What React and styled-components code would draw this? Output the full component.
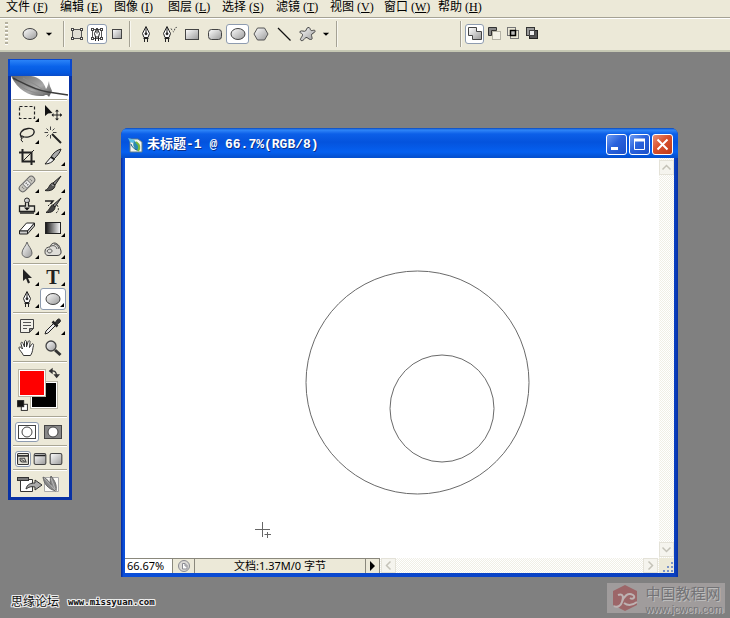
import React from 'react'
import styled, { createGlobalStyle, css } from 'styled-components'

const sans = '"Liberation Sans", "Noto Sans CJK SC", sans-serif'
const face = '#ece9d8'
const navy = '#0831a5'

const GlobalStyle = createGlobalStyle`
  * {
    box-sizing: border-box;
  }
  body {
    margin: 0;
    background: #808080;
    font-family: ${sans};
    font-size: 12px;
    color: #000;
  }
  button, input {
    font: inherit;
    color: inherit;
    padding: 0;
    margin: 0;
    border: 0;
    background: none;
    border-radius: 0;
  }
  svg {
    display: block;
    flex: none;
  }
`

const Page = styled.div`
  display: flex;
  flex-direction: column;
  min-height: 100vh;
`

/* menu bar */

const MenuBar = styled.nav`
  display: flex;
  height: 17px;
  padding-left: 6px;
  background: ${face};
`
const MenuButton = styled.button`
  flex: 0 0 54px;
  display: flex;
  gap: 3px;
  align-items: center;
  height: 15px;
  font-family: "Liberation Serif", "Noto Sans CJK SC", serif;
  line-height: 15px;
  white-space: nowrap;
`

/* options bar */

const OptionsBar = styled.div`
  display: flex;
  align-items: center;
  height: 35px;
  padding-left: 5px;
  background: ${face};
  border-top: 1px solid #a5a294;
  border-bottom: 2px solid #c6c8b4;
  box-shadow: inset 0 1px #fff;
`
const Grip = styled.div`
  width: 3px;
  height: 24px;
  margin-right: 11px;
  background: repeating-linear-gradient(#b5b19f 0 2px, #fff 2px 3px, ${face} 3px 4px);
`
const OptionGroup = styled.div`
  display: flex;
  align-items: center;
  height: 26px;
  min-width: ${(p) => p.$min || 0}px;
  padding: 0 2px 0 ${(p) => p.$left || 0}px;
  ${(p) =>
    p.$divided &&
    css`
      border-left: 1px solid #a5a294;
      box-shadow: inset 1px 0 #f8f7f0;
    `}
`
const selected = css`
  background: #fff;
  border: 1px solid #8e9cb0;
  border-radius: 3px;
`
const OptionButton = styled.button`
  display: flex;
  align-items: center;
  justify-content: center;
  width: ${(p) => p.$w || 23}px;
  height: 20px;
  ${(p) => p.$on && selected}
`

/* desktop area */

const Desk = styled.main`
  flex: 1;
  display: flex;
  align-items: flex-start;
  gap: 49px;
  padding: 7px 52px 0 8px;
`

/* tool palette */

const Palette = styled.aside`
  flex: none;
  width: 64px;
  border: solid ${navy};
  border-width: 0 3px 3px;
  background: ${face};
`
const PaletteTitle = styled.div`
  height: 17px;
  margin: 0 -3px;
  border: solid #0a48cc;
  border-width: 1px 2px 0;
  background: linear-gradient(#2a83f8, #0a63ea 40%, #0458de 80%, #0a4cc8);
`
const Feather = styled.div`
  height: 23px;
  background: #fff;
`
const ToolGroup = styled.div`
  display: grid;
  grid-template-columns: 26px 26px;
  justify-content: center;
  padding: 2px 0;
  margin: 0 2px;
  border-top: 1px solid #a9a695;
  box-shadow: inset 0 1px #fff;
`
const ToolButton = styled.button`
  position: relative;
  display: flex;
  align-items: center;
  justify-content: center;
  height: 22px;
  ${(p) => p.$on && selected}
  ${(p) =>
    p.$more &&
    css`
      &::after {
        content: '';
        position: absolute;
        right: 1px;
        bottom: 2px;
        border: 2px solid #000;
        border-top-color: transparent;
        border-left-color: transparent;
      }
    `}
`
const PaletteRow = styled.div`
  display: flex;
  align-items: center;
  justify-content: space-between;
  height: ${(p) => p.$h}px;
  margin: 0 2px;
  padding: 2px 3px 0 2px;
  border-top: 1px solid #a9a695;
  box-shadow: inset 0 1px #fff;
`
const ModeButton = styled.button`
  display: flex;
  align-items: center;
  justify-content: center;
  width: ${(p) => p.$w}px;
  height: ${(p) => p.$h}px;
  ${(p) => p.$on && selected}
`
const Swatches = styled.div`
  position: relative;
  width: 48px;
  height: 44px;
`
const Swatch = styled.button`
  position: absolute;
  left: ${(p) => p.$x}px;
  top: ${(p) => p.$y}px;
  width: 28px;
  height: 28px;
  background: ${(p) => p.$color};
  border: 1px solid #fff;
  outline: 1px solid #b9b6a6;
  outline-offset: -1px;
  box-shadow: inset 0 0 0 1px #fff;
`
const SwatchTool = styled.button`
  position: absolute;
  left: ${(p) => p.$x}px;
  top: ${(p) => p.$y}px;
`

/* document window */

const DocWindow = styled.section`
  flex: 1;
  align-self: stretch;
  display: flex;
  flex-direction: column;
  min-width: 300px;
  margin-top: 69px;
  padding: 0 4px 4px;
  border-radius: 7px 7px 0 0;
  background: linear-gradient(90deg, ${navy} 1px, #0a4ed8 2px, #0a3fc0 calc(100% - 3px), ${navy});
`
const TitleBar = styled.header`
  display: flex;
  align-items: center;
  gap: 4px;
  height: 30px;
  margin: 0 -4px;
  padding: 3px 5px 0 6px;
  border-radius: 7px 7px 0 0;
  background: linear-gradient(#0a47b8, #2f86f8 2px, #0c5fe8 6px, #0453dd 14px, #0560f0 24px, #0450d0 29px);
`
const DocTitle = styled.h1`
  flex: 1;
  margin: 0;
  font: bold 13px/18px "Liberation Mono", "Noto Sans CJK SC", monospace;
  color: #fff;
  text-shadow: 1px 1px #0a2f88;
  white-space: nowrap;
  overflow: hidden;
`
const WindowButtons = styled.div`
  display: flex;
  gap: 2px;
`
const WindowButton = styled.button`
  width: 21px;
  height: 21px;
  border: 1px solid #fff;
  border-radius: 3px;
  background: ${(p) =>
    p.$close
      ? 'linear-gradient(135deg, #e89078, #d8502c 45%, #c03a18)'
      : 'linear-gradient(135deg, #6c9cf4, #2a62dc 45%, #1c50c8)'};
`
const DocBody = styled.div`
  flex: 1;
  display: flex;
  background: #fff;
`
const Canvas = styled.div`
  flex: 1;
  display: flex;
`
const Drawing = styled.svg`
  flex: 1;
  width: 100%;
  height: 400px;
  min-width: 0;
`
const track = css`
  background: repeating-conic-gradient(#f0efe6 0 25%, #fff 0 50%) 0 0 / 2px 2px;
`
const VScroll = styled.div`
  display: flex;
  flex-direction: column;
  justify-content: space-between;
  width: 15px;
  padding: 2px 0 1px;
  ${track}
`
const HScroll = styled.div`
  flex: 1;
  display: flex;
  justify-content: space-between;
  padding: 0 1px 0 1px;
  ${track}
`
const ScrollButton = styled.button`
  display: flex;
  align-items: center;
  justify-content: center;
  width: 15px;
  height: 15px;
  background: #f5f4ee;
  border: 1px solid #e4e2d8;
`
const StatusBar = styled.footer`
  display: flex;
  height: 15px;
  background: ${face};
  font: 11px/14px "Noto Sans", "Noto Sans CJK SC", sans-serif;
`
const ZoomInput = styled.input`
  width: 48px;
  padding-left: 2px;
  background: #fff;
  border-top: 1px solid #8a887c;
  border-right: 1px solid #8a887c;
`
const StatusCell = styled.div`
  display: flex;
  align-items: center;
  justify-content: center;
  width: ${(p) => p.$w}px;
  height: 15px;
  border-top: 1px solid #8a887c;
  border-right: 1px solid #8a887c;
  white-space: nowrap;
`
const StatusArrow = styled(StatusCell).attrs({ as: 'button' })``
const ResizeGrip = styled.div`
  width: 15px;
  height: 15px;
`

/* site marks under the window */

const Marks = styled.footer`
  display: flex;
  justify-content: space-between;
  align-items: flex-start;
  height: 41px;
  padding: 6px 5px 0 11px;
`
const ForumMark = styled.div`
  display: flex;
  align-items: center;
  gap: 9px;
  padding-top: 11px;
  line-height: 16px;
  color: #111;
  text-shadow: 1px 0 #eee, -1px 0 #eee, 0 1px #eee, 0 -1px #eee, 1px 1px #eee, -1px -1px #eee, 1px -1px #eee, -1px 1px #eee;
`
const ForumLink = styled.a`
  font: bold 9px/12px "DejaVu Sans Mono", monospace;
  color: inherit;
  text-decoration: none;
`
const SiteMark = styled.a`
  display: flex;
  align-items: center;
  gap: 6px;
  height: 30px;
  padding: 0 2px 0 4px;
  background: #a09c9c;
  color: #737376;
  text-decoration: none;
  text-shadow: 1px 1px #bdbdbd;
`
const SiteName = styled.div`
  font: 15px/22px "Noto Sans CJK SC", sans-serif;
  white-space: nowrap;
`
const SiteUrl = styled.div`
  font: 11px/10px "Liberation Sans", sans-serif;
`

/* gradients shared by all icons */
const HiddenSvg = styled.svg`
  position: absolute;
`
const Paints = () => (
  <HiddenSvg width="0" height="0" aria-hidden="true">
    <defs>
      <linearGradient id="metal" x1="0" y1="0" x2="1" y2="1">
        <stop offset="0" stopColor="#fff" />
        <stop offset="1" stopColor="#999" />
      </linearGradient>
      <linearGradient id="ramp">
        <stop offset="0" stopColor="#111" />
        <stop offset="1" stopColor="#fff" />
      </linearGradient>
      <linearGradient id="plume" x1="0" y1="0" x2="1" y2="1">
        <stop offset="0" stopColor="#666" />
        <stop offset=".6" stopColor="#a8a8a8" />
        <stop offset="1" stopColor="#555" />
      </linearGradient>
    </defs>
  </HiddenSvg>
)

const Icon = ({ size = 18, children }) => (
  <svg width={size} height={size} viewBox="0 0 18 18" fill="none" stroke="#222" aria-hidden="true">
    {children}
  </svg>
)

const nib = (
  <>
    <path d="M9 1.5L5.5 8.5L7 12.5H11L12.5 8.5Z" fill="#fff" />
    <path d="M9 2V8" />
    <circle cx="9" cy="8.8" r="1" fill="#222" />
    <path d="M6.5 13.5H11.5M7.5 14V17M10.5 14V17" />
  </>
)
const handles = (
  <g fill="#fff" stroke="#444" shapeRendering="crispEdges">
    <rect x="3.5" y="3.5" width="2" height="2" />
    <rect x="12.5" y="3.5" width="2" height="2" />
    <rect x="3.5" y="12.5" width="2" height="2" />
    <rect x="12.5" y="12.5" width="2" height="2" />
  </g>
)

const icons = {
  ellipse: <ellipse cx="9" cy="9" rx="7" ry="5.5" fill="url(#metal)" stroke="#444" />,
  down: <path d="M5.5 7.5H12.5L9 11Z" fill="#000" stroke="none" />,
  shapeLayer: (
    <>
      <rect x="4.5" y="4.5" width="9" height="9" fill="#e0ded4" stroke="#555" />
      {handles}
    </>
  ),
  paths: (
    <>
      <rect x="4.5" y="4.5" width="9" height="9" stroke="#555" />
      {handles}
      <path d="M9 3L6.5 8.5L7.5 12H10.5L11.5 8.5Z" fill="#fff" />
      <path d="M9 4V8.5M7.5 12V16M10.5 12V16" />
    </>
  ),
  fillPixels: <rect x="4.5" y="4.5" width="9" height="9" fill="url(#metal)" stroke="#444" />,
  pen: nib,
  freePen: (
    <>
      <g transform="translate(-2 0)">{nib}</g>
      <path d="M11 3.5C13 7 14 8 14.5 5S16 2 18 3" stroke="#444" strokeDasharray="1.5 1.5" />
    </>
  ),
  rect: <rect x="2.5" y="4.5" width="13" height="10" fill="url(#metal)" stroke="#444" />,
  rounded: <rect x="2.5" y="4.5" width="13" height="10" rx="3" fill="url(#metal)" stroke="#444" />,
  polygon: <path d="M5.5 3H12.5L16 9L12.5 15H5.5L2 9Z" fill="url(#metal)" stroke="#555" />,
  line: <path d="M3 3L15.5 15.5" stroke="#111" strokeWidth="1.3" />,
  custom: (
    <path
      d="M10 2.5C12.5 2 12 5 13 5.5S17.500 4 17 6.500C16.500 8.500 13 8 13.500 10.500S15 14.500 12.500 14.500C10.500 14.500 9.500 12 8 12.500S5.500 16.500 3 15.500C1 14 5 11.500 4.500 9.500S.500 8 2 6.500S6.500 7 7.500 6S8.500 3 10 2.500Z"
      fill="url(#metal)"
      stroke="#444"
    />
  ),
  add: <path d="M2.5 2.5H10.5V6.5H15.5V14.5H6.5V10.5H2.5Z" fill="url(#metal)" stroke="#444" />,
  subtract: (
    <>
      <path d="M3.5 2.5H11.5V5.5H6.5V10.5H3.5Z" fill="#888" stroke="#333" />
      <rect x="7.5" y="6.5" width="8" height="8" fill="#f4f2e8" stroke="#b5b3a6" />
    </>
  ),
  intersect: (
    <>
      <rect x="3.5" y="2.5" width="8" height="8" stroke="#777" />
      <rect x="6.5" y="5.5" width="8" height="8" stroke="#777" />
      <rect x="6.5" y="5.5" width="5" height="5" fill="#bbb" stroke="#000" strokeWidth="1.5" />
    </>
  ),
  exclude: (
    <>
      <rect x="3.5" y="2.5" width="8" height="8" fill="#999" stroke="#333" />
      <rect x="6.5" y="5.5" width="8" height="8" fill="#555" stroke="#222" />
      <rect x="6.5" y="5.5" width="5" height="5" fill="#eee" stroke="#444" />
    </>
  ),
  marquee: <rect x="1.5" y="2.5" width="15" height="12" strokeDasharray="3 2" strokeWidth="1.2" />,
  move: (
    <>
      <path d="M1 1V12L4 9.5L8.5 9Z" fill="#111" stroke="none" />
      <path d="M13 6V16M8 11H18" />
      <path d="M11 7.5L13 5.5L15 7.5ZM11 14.5L13 16.5L15 14.5ZM9.5 9L7.5 11L9.5 13ZM16 9L18 11L16 13Z" fill="#222" stroke="none" />
    </>
  ),
  lasso: (
    <>
      <path d="M4 11C0 8 4 3 10 2.5S17 5 15.5 8S8 12 4.5 10.5" strokeWidth="1.3" />
      <path d="M4.5 10C2.5 9.5 2 12 4 12S6 10 4.5 10M4 12C2.5 13 3 15 5 16" />
    </>
  ),
  wand: (
    <>
      <path d="M8 8L17 17" strokeWidth="2" />
      <path d="M6.5 .5V4M6.5 9V12.5M.5 6.5H4M9 6.5H12.5M2.5 2.5L4.5 4.5M10.5 2.5L8.5 4.5M2.5 10.5L4.5 8.5" stroke="#444" />
    </>
  ),
  crop: (
    <>
      <path d="M4.5 1V13.5H17M1 4.5H13.5V17" strokeWidth="2" />
      <path d="M5 13L16 2" />
    </>
  ),
  slice: (
    <>
      <path d="M17 1C13 2 9 5 7 9L10 11C13 8 16 5 17 1Z" fill="#aaa" />
      <path d="M7 9L1 16C5 16 9 14 10.5 11Z" fill="#eee" />
      <path d="M7 9L10.5 11.5" strokeWidth="2" />
    </>
  ),
  heal: (
    <g transform="rotate(-45 9 9)">
      <rect x="-.5" y="5.5" width="19" height="7" rx="3.5" fill="#c9c7bf" stroke="#666" />
      <rect x="6" y="6" width="6" height="6" fill="#eee" stroke="#888" />
      <path d="M3 8H4M3 10H4M14 8H15M14 10H15M8 8H10M8 10H10" stroke="#666" />
    </g>
  ),
  brush: (
    <>
      <path d="M17 1L9 8L11 10Z" fill="#888" />
      <path d="M8.5 8C5 9 6 13 1 15.5C6 16.5 11 14.5 11 10Z" fill="#555" />
      <path d="M8 9.5L9.5 11" stroke="#ddd" />
    </>
  ),
  stamp: (
    <>
      <circle cx="9" cy="3.500" r="2.500" fill="url(#metal)" />
      <path d="M7.500 6V9H1.500V14.500H16.500V9H10.500V6" fill="#e6e4da" strokeWidth="1.300" />
      <path d="M6 10.500H12L9 13.500Z" fill="#111" stroke="none" />
      <path d="M2 16H16" strokeWidth="1.500" />
    </>
  ),
  history: (
    <>
      <path d="M17 1L9 8L11 10Z" fill="#888" />
      <path d="M8.5 8C6 9 6 13 2 15.5C7 16 11 14 11 10Z" fill="#444" />
      <path d="M1 4H9L6.5 7" strokeWidth="1.5" />
      <path d="M4 9L8 5M13 8C15 11 15 14 12 16" strokeDasharray="2 1.5" />
    </>
  ),
  eraser: (
    <>
      <path d="M1.5 12L8.5 4H16.5L9.5 12Z" fill="#fff" />
      <path d="M1.5 12V15H9.5L16.5 7V4L9.5 12Z" fill="#ccc" />
      <path d="M9.5 12V15" />
    </>
  ),
  gradient: <rect x="1.5" y="3.5" width="15" height="11" fill="url(#ramp)" />,
  blur: <path d="M9 1C8 5 4 8 4 12A5 4.5 0 0 0 14 12C14 8 10 5 9 1Z" fill="url(#metal)" stroke="#666" />,
  sponge: (
    <>
      <path d="M1 10C1 7 4 6 6 6C7 2 11 1 13 3C15 4 16 6 17 10C17.5 13 16 14.5 13 14.5H4C1 14 1 12 1 10Z" fill="#deddd8" stroke="#444" />
      <path d="M3 10C5 7 8 8 8 10S4 13 3 10M7 5C10 4 12 5 13 8M10 3C13 3 14 5 15 8" stroke="#555" />
    </>
  ),
  select: <path d="M5 1V13L8 10.5L10 15.5L12 14.5L10 10H14Z" fill="#222" stroke="none" />,
  note: (
    <>
      <path d="M2.5 2.5H15.5V11.5L11.5 15.5H2.5Z" fill="#f2f1ea" stroke="#444" />
      <path d="M5 5.5H13M5 8.5H13M5 11.5H9" stroke="#555" />
      <path d="M11.5 15.5V11.5H15.5Z" fill="#888" stroke="#444" />
    </>
  ),
  dropper: (
    <>
      <path d="M10 6L2 14L1 17L4 16L12 8" fill="#eee" />
      <path d="M8.5 4.5L13.5 9.5" strokeWidth="2.5" />
      <path d="M11 6L13.5 2.5C15 1 17.5 3 16 5L12.5 8Z" fill="#333" />
    </>
  ),
  hand: (
    <path
      d="M5.5 16.5C4 13 1 11 1 9S3 8 4.5 10L3 5C2.5 3 4.5 2.5 5 4.5L6.5 8L6.5 3C6.5 1 8.5 1 8.5 3V8L10 3C10.5 1 12.5 1.5 12 3.5L11.5 8.5L13.5 5.5C14.5 4 16 5 15.5 6.5C14.5 9.5 15 13 12.5 16.5Z"
      fill="#fff"
      stroke="#333"
    />
  ),
  zoom: (
    <>
      <path d="M11 11L16.5 16" stroke="#333" strokeWidth="3" />
      <circle cx="7" cy="7" r="5" fill="url(#metal)" stroke="#444" strokeWidth="1.3" />
    </>
  ),
  swap: (
    <>
      <path d="M4 6C10 5 12 7 13 13" stroke="#333" strokeWidth="2" />
      <path d="M7 1V11L1 6ZM8 11H18L13 17Z" fill="#333" stroke="none" />
    </>
  ),
  resetColors: (
    <g strokeWidth="1.5">
      <rect x="7" y="7" width="10" height="10" fill="#fff" />
      <rect x="1" y="1" width="10" height="10" fill="#111" />
    </g>
  ),
  screenStd: (
    <>
      <rect x="2" y="2" width="14" height="14" rx="1" fill="#e0ded4" stroke="#333" strokeWidth="1.4" />
      <path d="M2 5H16" strokeWidth="2" />
      <path d="M5 8H11L13 13H8Q5 12 5 8M7 9.5L11 12" stroke="#444" strokeWidth="1.3" />
    </>
  ),
  screenMenu: (
    <>
      <rect x="1.5" y="2" width="15" height="14" rx="2" fill="url(#metal)" stroke="#444" strokeWidth="1.4" />
      <path d="M2 4.5H16" strokeWidth="2" />
    </>
  ),
  screenFull: <rect x="1.5" y="2" width="15" height="14" rx="2" fill="url(#metal)" stroke="#444" strokeWidth="1.4" />,
}

const menus = [
  ['文件', 'F'],
  ['编辑', 'E'],
  ['图像', 'I'],
  ['图层', 'L'],
  ['选择', 'S'],
  ['滤镜', 'T'],
  ['视图', 'V'],
  ['窗口', 'W'],
  ['帮助', 'H'],
]

const modes = [
  ['shapeLayer', '形状图层'],
  ['paths', '路径', true],
  ['fillPixels', '填充像素'],
]
const shapes = [
  ['pen', '钢笔工具'],
  ['freePen', '自由钢笔工具'],
  ['rect', '矩形工具'],
  ['rounded', '圆角矩形工具'],
  ['ellipse', '椭圆工具', true],
  ['polygon', '多边形工具'],
  ['line', '直线工具'],
  ['custom', '自定形状工具'],
]
const combine = [
  ['add', '添加到路径区域', true],
  ['subtract', '从路径区域减去'],
  ['intersect', '交叉路径区域'],
  ['exclude', '重叠路径区域除外'],
]

// name, label, has flyout, active
const toolGroups = [
  [
    ['marquee', '选框', true],
    ['move', '移动'],
    ['lasso', '套索', true],
    ['wand', '魔棒'],
    ['crop', '裁剪'],
    ['slice', '切片', true],
  ],
  [
    ['heal', '修复画笔', true],
    ['brush', '画笔', true],
    ['stamp', '图章', true],
    ['history', '历史记录画笔', true],
    ['eraser', '橡皮擦', true],
    ['gradient', '渐变', true],
    ['blur', '模糊', true],
    ['sponge', '海绵', true],
  ],
  [
    ['select', '路径选择', true],
    ['type', '文字', true],
    ['pen', '钢笔', true],
    ['ellipse', '椭圆', true, true],
  ],
  [
    ['note', '注释', true],
    ['dropper', '吸管', true],
    ['hand', '抓手'],
    ['zoom', '缩放'],
  ],
]

const TypeGlyph = styled.span`
  font: bold 20px/20px "Liberation Serif", serif;
  color: #222;
`

const OptionButtons = ({ items, w }) =>
  items.map(([name, label, on]) => (
    <OptionButton key={name} $w={w} $on={on} aria-label={label} aria-pressed={!!on}>
      <Icon>{icons[name]}</Icon>
    </OptionButton>
  ))

const Options = () => (
  <OptionsBar>
    <Grip />
    <OptionGroup $min={44}>
      <OptionButton $w={22} aria-label="当前工具">
        <Icon>{icons.ellipse}</Icon>
      </OptionButton>
      <OptionButton $w={16} aria-label="工具预设">
        <Icon size={16}>{icons.down}</Icon>
      </OptionButton>
    </OptionGroup>
    <OptionGroup $divided $left={3}>
      <OptionButtons items={modes} w={20} />
    </OptionGroup>
    <OptionGroup $divided $left={4}>
      <OptionButtons items={shapes} />
      <OptionButton $w={16} aria-label="几何选项">
        <Icon size={16}>{icons.down}</Icon>
      </OptionButton>
    </OptionGroup>
    <OptionGroup $divided $min={124} />
    <OptionGroup $divided $left={4}>
      <OptionButtons items={combine} w={19} />
    </OptionGroup>
  </OptionsBar>
)

const FeatherArt = () => (
  <svg width="58" height="23" viewBox="0 0 58 23" fill="none" aria-hidden="true">
    <path d="M0 0H20C28 1 33 6 35 13C37 10 37 8 38 5C38 9 40 12 41 15L40 17L38 21C36 18 35 19 32 20C20 21 7 15 0 0Z" fill="url(#plume)" />
    <path d="M6 3C14 10 24 14 33 16M12 2C19 6 28 10 33 15M5 7C12 13 22 17 32 18" stroke="#8c8c8c" />
    <path d="M2 2C14 8 24 14 37 16C44 17 50 18 57 19" stroke="#3c3c3c" strokeWidth="1.5" />
  </svg>
)

const Toolbox = () => (
  <Palette>
    <PaletteTitle />
    <Feather>
      <FeatherArt />
    </Feather>
    {toolGroups.map((tools) => (
      <ToolGroup key={tools[0][0]}>
        {tools.map(([name, label, more, on]) => (
          <ToolButton key={name} $more={more} $on={on} aria-label={label}>
            {name === 'type' ? <TypeGlyph>T</TypeGlyph> : <Icon>{icons[name]}</Icon>}
          </ToolButton>
        ))}
      </ToolGroup>
    ))}
    <PaletteRow $h={55}>
      <Swatches>
        <Swatch $x={15} $y={13} $color="#000" aria-label="背景色" />
        <Swatch $x={3} $y={1} $color="#f00" aria-label="前景色" />
        <SwatchTool $x={33} $y={-1} aria-label="切换颜色">
          <Icon size={12}>{icons.swap}</Icon>
        </SwatchTool>
        <SwatchTool $x={2} $y={32} aria-label="默认颜色">
          <Icon size={11}>{icons.resetColors}</Icon>
        </SwatchTool>
      </Swatches>
    </PaletteRow>
    <PaletteRow $h={29}>
      <ModeButton $w={24} $h={20} $on aria-label="标准模式">
        <svg width="20" height="16" viewBox="0 0 20 16" fill="#fff" stroke="#444">
          <rect x="1.5" y="1.5" width="17" height="13" />
          <circle cx="10" cy="8" r="5" />
        </svg>
      </ModeButton>
      <ModeButton $w={22} $h={20} aria-label="快速蒙版">
        <svg width="20" height="16" viewBox="0 0 20 16" stroke="#444">
          <rect x="1.5" y="1.5" width="17" height="13" fill="#888" />
          <circle cx="10" cy="8" r="5" fill="#fff" />
        </svg>
      </ModeButton>
    </PaletteRow>
    <PaletteRow $h={24}>
      <ModeButton $w={16} $h={16} $on aria-label="标准屏幕模式">
        <Icon size={14}>{icons.screenStd}</Icon>
      </ModeButton>
      <ModeButton $w={16} $h={16} aria-label="带菜单栏的全屏模式">
        <Icon size={14}>{icons.screenMenu}</Icon>
      </ModeButton>
      <ModeButton $w={16} $h={16} aria-label="全屏模式">
        <Icon size={14}>{icons.screenFull}</Icon>
      </ModeButton>
    </PaletteRow>
    <PaletteRow $h={28}>
      <ModeButton $w={48} $h={18} aria-label="在 ImageReady 中编辑">
        <svg width="44" height="18" viewBox="0 0 44 18" fill="none" stroke="#333">
          <path d="M3.5 3.5H15.5V15.5H3.5Z" fill="#fff" />
          <path d="M0 3H12" strokeWidth="4" />
          <path d="M1 3H11" stroke="#bbb" />
          <path d="M9 13C10 8 14 7 18 7V4L25 9L18 14V11C14 10 12 11 9 13Z" fill="#aaa" />
          <path d="M27.5 1.5H41.5V15.5H27.5Z" fill="#fbfaf6" stroke="#aaa" />
          <path d="M39 15C31 13 27 8 26 1C30 3 33 6 34 9C33 5 33 3 34 0C38 5 40 9 39 15Z" fill="#888" stroke="#666" />
          <path d="M27 2L39 15M34 2L38 13" stroke="#ccc" strokeWidth=".7" />
        </svg>
      </ModeButton>
    </PaletteRow>
  </Palette>
)

const Chevron = ({ turn = 0 }) => (
  <svg width="11" height="11" viewBox="0 0 11 11" fill="none" stroke="#c4c2b8" strokeWidth="1.5">
    <path d="M1.5 7.5L5.5 3.5L9.5 7.5" transform={`rotate(${turn} 5.5 5.5)`} />
  </svg>
)

const FileIcon = () => (
  <svg width="16" height="16" viewBox="0 0 16 16" fill="none">
    <path d="M3 2H11L15 5V15H3Z" fill="#f4f6ee" stroke="#5a7a8a" />
    <path d="M1 1L8 3L6 6L3 5Z" fill="#5cc0e8" />
    <path d="M7 4C12 6 13 10 11 14C7 12 5 8 7 4Z" fill="#2a8ab0" />
    <path d="M9 5C13 8 13 11 11 14" stroke="#7ab83c" strokeWidth="2" />
    <path d="M4 7C5 10 7 12 10 13" stroke="#145a88" />
  </svg>
)

const Document = () => (
  <DocWindow>
    <TitleBar>
      <FileIcon />
      <DocTitle>未标题-1 @ 66.7%(RGB/8)</DocTitle>
      <WindowButtons>
        <WindowButton aria-label="最小化">
          <svg width="19" height="19" viewBox="0 0 19 19">
            <rect x="4" y="12" width="7" height="3" fill="#fff" />
          </svg>
        </WindowButton>
        <WindowButton aria-label="最大化">
          <svg width="19" height="19" viewBox="0 0 19 19" fill="none" stroke="#fff">
            <path d="M4.5 4V14.5H14.5V4M4 5H15" />
            <path d="M4 5H15" strokeWidth="3" />
          </svg>
        </WindowButton>
        <WindowButton $close aria-label="关闭">
          <svg width="19" height="19" viewBox="0 0 19 19" stroke="#fff" strokeWidth="2">
            <path d="M4.5 4.5L14.5 14.5M14.5 4.5L4.5 14.5" />
          </svg>
        </WindowButton>
      </WindowButtons>
    </TitleBar>
    <DocBody>
      <Canvas>
        <Drawing fill="none" stroke="#6a6a6a" aria-label="画布">
          <circle cx="292.5" cy="224.5" r="111.5" />
          <ellipse cx="317" cy="250.5" rx="52" ry="53.5" />
          <path d="M137.5 364V379M130 371.5H145M142.5 374V380M139.5 376.5H146" stroke="#666" />
        </Drawing>
      </Canvas>
      <VScroll>
        <ScrollButton aria-label="向上滚动">
          <Chevron />
        </ScrollButton>
        <ScrollButton aria-label="向下滚动">
          <Chevron turn={180} />
        </ScrollButton>
      </VScroll>
    </DocBody>
    <StatusBar>
      <ZoomInput aria-label="缩放比例" defaultValue="66.67%" />
      <StatusCell $w={22}>
        <svg width="14" height="14" viewBox="0 0 14 14" fill="#dcdad6" stroke="#8a8a92">
          <circle cx="7" cy="7" r="5.5" />
          <path d="M5.5 4.5H8L10 6.5V10H5.5Z" fill="#fff" />
          <path d="M8 4.5V7H10" fill="none" />
        </svg>
      </StatusCell>
      <StatusCell $w={171}>文档:1.37M/0 字节</StatusCell>
      <StatusArrow $w={14} aria-label="状态栏选项">
        <svg width="6" height="10" viewBox="0 0 6 10">
          <path d="M0 0L5 5L0 10Z" />
        </svg>
      </StatusArrow>
      <HScroll>
        <ScrollButton aria-label="向左滚动">
          <Chevron turn={-90} />
        </ScrollButton>
        <ScrollButton aria-label="向右滚动">
          <Chevron turn={90} />
        </ScrollButton>
      </HScroll>
      <ResizeGrip>
        <svg width="15" height="15" viewBox="0 0 15 15" fill="#7c94c8">
          <path d="M12 4h2v2h-2zM8 8h2v2h-2zM12 8h2v2h-2zM4 12h2v2h-2zM8 12h2v2h-2zM12 12h2v2h-2z" />
        </svg>
      </ResizeGrip>
    </StatusBar>
  </DocWindow>
)

const App = () => (
  <Page>
    <GlobalStyle />
    <Paints />
    <MenuBar>
      {menus.map(([name, key]) => (
        <MenuButton key={key}>
          {name}
          <span>
            (<u>{key}</u>)
          </span>
        </MenuButton>
      ))}
    </MenuBar>
    <Options />
    <Desk>
      <Toolbox />
      <Document />
    </Desk>
    <Marks>
      <ForumMark>
        思缘论坛
        <ForumLink href="#forum">www.missyuan.com</ForumLink>
      </ForumMark>
      <SiteMark href="#site">
        <svg width="28" height="28" viewBox="0 0 28 28" fill="none">
          <path d="M14 1L26 7V21L14 27L2 21V7Z" fill="#9c6668" />
          <path d="M7 11C12 9 13 13 11 18C10 22 6 24 3 22M11 18C13 12 17 8 22 11C25 13 22 16 19 14M13 19C17 22 22 21 26 18" stroke="#bdb2b2" strokeWidth="2" />
        </svg>
        <div>
          <SiteName>中国教程网</SiteName>
          <SiteUrl>www.jcwcn.com</SiteUrl>
        </div>
      </SiteMark>
    </Marks>
  </Page>
)

export default App
